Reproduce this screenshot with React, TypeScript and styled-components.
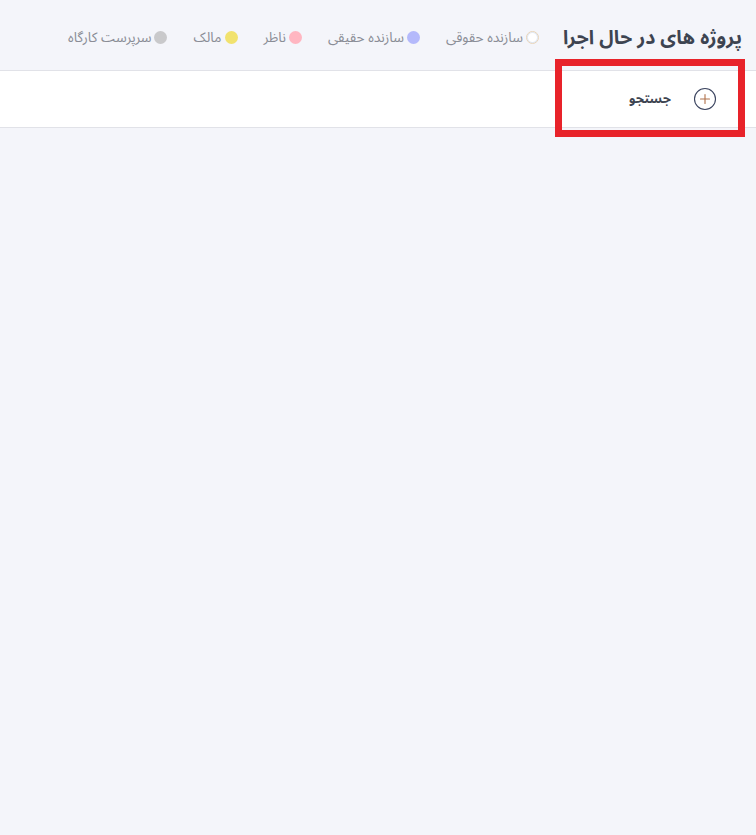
import React from "react";
import styled, { createGlobalStyle } from "styled-components";

const Global = createGlobalStyle`
  html, body { margin: 0; padding: 0; background: #f4f5fa; }
  body { font-family: "Noto Sans Arabic", "DejaVu Sans", sans-serif; }
  #root { min-height: 835px; }
`;

const Page = styled.div`
  position: relative;
  direction: rtl;
  width: 756px;
  min-height: 835px;
  background: #f4f5fa;
`;

const Header = styled.div`
  display: flex;
  align-items: center;
  height: 70px;
  padding: 4px 14px 0 0;
  box-sizing: border-box;
  gap: 24px;
`;

const Title = styled.h1`
  margin: 0;
  font-size: 19.5px;
  font-weight: 700;
  color: #3d4451;
  white-space: nowrap;
`;

const Legend = styled.div`
  display: flex;
  align-items: center;
  gap: 26px;
`;

const LegendItem = styled.div`
  display: flex;
  align-items: center;
  gap: 3px;
  font-size: 13.7px;
  color: #8a8d96;
  white-space: nowrap;
`;

const Dot = styled.span<{ $color: string; $outlined?: boolean }>`
  flex: none;
  width: 13px;
  height: 13px;
  border-radius: 50%;
  background: ${(p) => p.$color};
  box-sizing: border-box;
  border: ${(p) => (p.$outlined ? "1px solid #e8d4b8" : "none")};
  box-shadow: ${(p) => (p.$outlined ? "inset 0 0 0 1px #dfe8f6" : "none")};
`;

const Bar = styled.div`
  display: flex;
  align-items: center;
  height: 58px;
  box-sizing: border-box;
  background: #ffffff;
  border-top: 1px solid #e1e2e8;
  border-bottom: 1px solid #e1e2e8;
  padding-right: 39px;
  gap: 22px;
`;

const AddButton = styled.button`
  width: 24px;
  height: 24px;
  padding: 0;
  border: none;
  background: transparent;
  display: flex;
  align-items: center;
  justify-content: center;
  cursor: pointer;
`;

const SearchLabel = styled.span`
  font-size: 13px;
  font-weight: 700;
  color: #3d4451;
`;

const Highlight = styled.div`
  position: absolute;
  left: 555px;
  top: 59px;
  width: 190px;
  height: 78px;
  box-sizing: border-box;
  border: 7px solid #e8232a;
  pointer-events: none;
`;

const items = [
  { label: "سازنده حقوقی", color: "#ffffff", outlined: true },
  { label: "سازنده حقیقی", color: "#b4b9fb" },
  { label: "ناظر", color: "#ffb6c1" },
  { label: "مالک", color: "#f1e26e" },
  { label: "سرپرست کارگاه", color: "#c9c9cb" },
];

export default function App() {
  return (
    <>
      <Global />
      <Page>
        <Header>
          <Title>پروژه های در حال اجرا</Title>
          <Legend>
            {items.map((it) => (
              <LegendItem key={it.label}>
                <Dot $color={it.color} $outlined={it.outlined} />
                {it.label}
              </LegendItem>
            ))}
          </Legend>
        </Header>
        <Bar>
          <AddButton aria-label="add">
            <svg width="24" height="24" viewBox="0 0 24 24" fill="none">
              <circle cx="12" cy="12" r="10.5" stroke="#3c4560" strokeWidth="1.1" />
              <path d="M12 7.5v9M7.5 12h9" stroke="#b0704a" strokeWidth="1.1" strokeLinecap="round" />
            </svg>
          </AddButton>
          <SearchLabel>جستجو</SearchLabel>
        </Bar>
        <Highlight />
      </Page>
    </>
  );
}
